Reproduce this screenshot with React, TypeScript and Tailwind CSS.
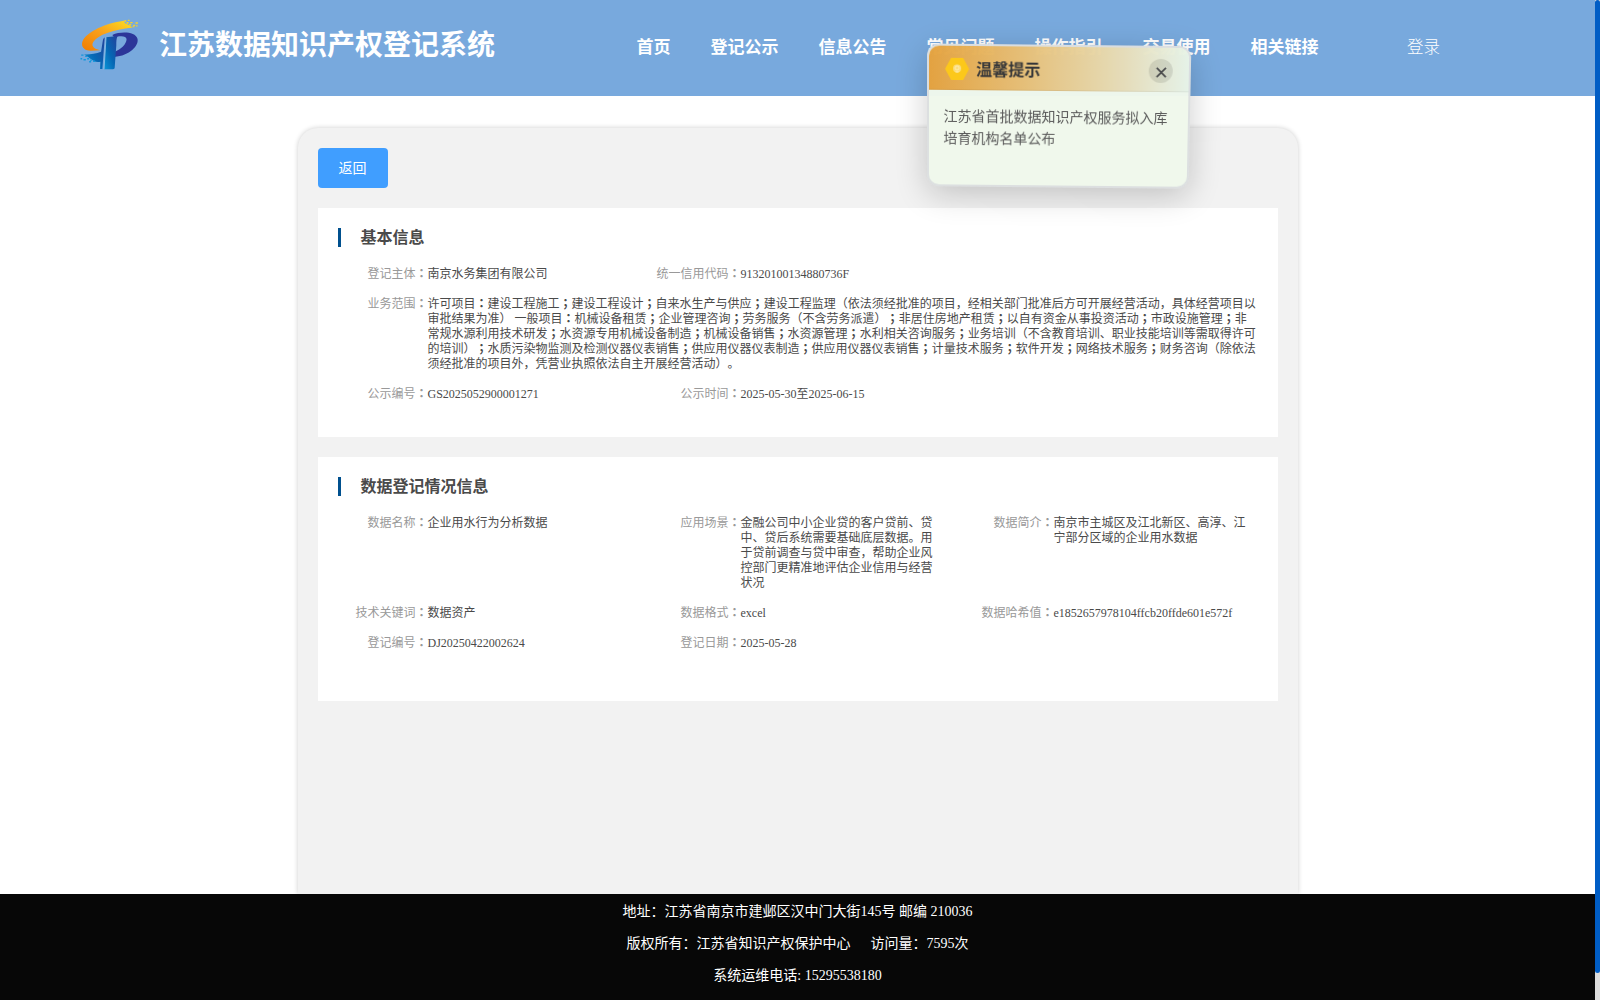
import { Fragment } from "react";

type Field = {
  label: string;
  value: string;
  wide?: boolean;
  half?: boolean;
};

const navItems = ["首页", "登记公示", "信息公告", "常见问题", "操作指引", "交易使用", "相关链接"];

const basicFields: Field[] = [
  { label: "登记主体", value: "南京水务集团有限公司" },
  { label: "统一信用代码", value: "91320100134880736F", half: true },
  {
    label: "业务范围",
    value:
      "许可项目：建设工程施工；建设工程设计；自来水生产与供应；建设工程监理（依法须经批准的项目，经相关部门批准后方可开展经营活动，具体经营项目以\n" +
      "审批结果为准） 一般项目：机械设备租赁；企业管理咨询；劳务服务（不含劳务派遣）；非居住房地产租赁；以自有资金从事投资活动；市政设施管理；非\n" +
      "常规水源利用技术研发；水资源专用机械设备制造；机械设备销售；水资源管理；水利相关咨询服务；业务培训（不含教育培训、职业技能培训等需取得许可\n" +
      "的培训）；水质污染物监测及检测仪器仪表销售；供应用仪器仪表制造；供应用仪器仪表销售；计量技术服务；软件开发；网络技术服务；财务咨询（除依法\n" +
      "须经批准的项目外，凭营业执照依法自主开展经营活动）。",
    wide: true,
  },
  { label: "公示编号", value: "GS2025052900001271" },
  { label: "公示时间", value: "2025-05-30至2025-06-15", half: true },
];

const dataFields: Field[] = [
  { label: "数据名称", value: "企业用水行为分析数据" },
  {
    label: "应用场景",
    value:
      "金融公司中小企业贷的客户贷前、贷\n中、贷后系统需要基础底层数据。用\n于贷前调查与贷中审查，帮助企业风\n控部门更精准地评估企业信用与经营\n状况",
  },
  { label: "数据简介", value: "南京市主城区及江北新区、高淳、江\n宁部分区域的企业用水数据" },
  { label: "技术关键词", value: "数据资产" },
  { label: "数据格式", value: "excel" },
  { label: "数据哈希值", value: "e1852657978104ffcb20ffde601e572f" },
  { label: "登记编号", value: "DJ20250422002624" },
  { label: "登记日期", value: "2025-05-28" },
];

function Logo() {
  return (
    <svg viewBox="30 25 180 160" className="h-[53px] w-[60px]" aria-hidden>
      <defs>
        <linearGradient id="swoosh" x1="0" y1="1" x2="1" y2="0">
          <stop offset="0" stopColor="#f07c00" />
          <stop offset="0.5" stopColor="#f9a01b" />
          <stop offset="1" stopColor="#fde021" />
        </linearGradient>
        <linearGradient id="stem" x1="0" y1="1" x2="1" y2="0">
          <stop offset="0" stopColor="#0a94d6" />
          <stop offset="0.45" stopColor="#0567b4" />
          <stop offset="1" stopColor="#24409a" />
        </linearGradient>
      </defs>
      <path
        d="M162 33 C118 38 62 60 42 86 C28 106 38 124 62 124 L91 122 C70 119 62 108 70 97 C84 76 128 61 188 54 L179 48 L172 44 L165 41 Z"
        fill="url(#swoosh)"
      />
      <path
        d="M163 32h6v4h-6z M174 30h5v4h-5z M170 37h6v5h-6z M181 37h7v4h-7z M178 43h6v5h-6z M190 45h6v4h-6z M197 38h7v4h-7z M188 50h6v3h-6z M199 47h4v4h-4z"
        fill="#fbd324"
      />
      <path
        d="M104 84 C102 84 99 88 98 95 L93 127 C76 133 58 136 42 135 L54 143 L62 149 L70 154 C77 158 84 159 91 157 L90 179 L97 179 Z"
        fill="url(#stem)"
      />
      <path
        d="M33 135h7v4h-7z M45 139h7v4h-7z M31 146h5v4h-5z M40 149h7v4h-7z M51 146h6v4h-6z M60 150h6v4h-6z M57 155h6v4h-6z M69 153h6v5h-6z"
        fill="#1298dc"
      />
      <path
        d="M133 143 C179 139 208 109 203 88 C197 66 153 65 127 76 L133 84 C151 77 170 79 170 89 C170 103 153 120 134 127 Z"
        fill="#2c3699"
      />
      <path d="M108 83 L143 79 C139 86 139 96 139 108 L134 176 C133 179 130 180 127 180 L102 180 Z" fill="url(#stem)" />
      <path d="M108 83 L102 180" stroke="#8fc4eb" strokeWidth="2.5" />
    </svg>
  );
}

// Colons and semicolons sit in the middle of their cell, unlike the other marks.
function Prose({ text }: { text: string }) {
  return (
    <>
      {text.split(/([：；])/).map((part, index) =>
        part === "：" || part === "；" ? (
          <span key={index} className="font-['Liberation_Serif','Noto_Sans_CJK_JP',sans-serif] font-bold" lang="ja">
            {part}
          </span>
        ) : (
          <Fragment key={index}>{part}</Fragment>
        ),
      )}
    </>
  );
}

function InfoField({ label, value, wide, half }: Field) {
  return (
    <div className={wide ? "col-span-3 flex" : half ? "col-span-2 flex" : "flex"}>
      <span className="w-[90px] shrink-0 text-right text-[#999]">
        <Prose text={`${label}：`} />
      </span>
      <span className="whitespace-pre text-[#4a4a4a]">
        <Prose text={value} />
      </span>
    </div>
  );
}

function InfoCard({ title, fields, className }: { title: string; fields: Field[]; className: string }) {
  return (
    <section className={`bg-white p-5 ${className}`}>
      <h2 className="flex h-[19px] items-center border-l-[3px] border-[#00508e] pl-5 text-base font-bold text-[#4a4a4a]">
        {title}
      </h2>
      <div className="mt-5 grid grid-cols-[313px_313px_313px] gap-y-[15px] text-xs leading-[15px]">
        {fields.map((field) => (
          <InfoField key={field.label} {...field} />
        ))}
      </div>
    </section>
  );
}

function NoticePopup() {
  return (
    <div className="absolute left-[927px] top-[45px] h-[143px] w-[263px] overflow-hidden rounded-xl border-2 border-[#dcdfe0] bg-[#f0f8ec] opacity-[0.98] shadow-[0_8px_32px_rgba(0,0,0,0.2)] [transform:perspective(1000px)_rotateX(-4deg)_rotate(0.57deg)]">
      <div className="flex h-11 items-center border-b border-black/5 bg-[linear-gradient(90deg,#e6a23c_0%,#e8c178_38%,#e8d8ab_68%,#e8f4e8_100%)] pl-4 pr-4">
        <svg viewBox="0 0 24 22" className="mt-0.5 h-[22px] w-6" aria-hidden>
          <path d="M6 0h12l6 11-6 11H6L0 11z" fill="#ffc914" />
          <circle cx="12" cy="10.5" r="4" fill="#ffdf7a" />
          <circle cx="12" cy="10" r="2" fill="none" stroke="#fff0b5" strokeWidth="0.8" />
          <path d="M10.5 14h3" stroke="#fff0b5" />
        </svg>
        <h3 className="ml-[7px] mt-1 text-base font-bold text-[#333]">温馨提示</h3>
        <button className="ml-auto mt-[3px] flex h-6 w-6 items-center justify-center rounded-full bg-black/10" aria-label="关闭">
          <svg viewBox="0 0 12 12" className="mt-[3px] h-[11px] w-[11px]" stroke="#444" strokeWidth="1.8" aria-hidden>
            <path d="M1 1l10 10M11 1L1 11" />
          </svg>
        </button>
      </div>
      <p className="whitespace-nowrap px-[14.5px] pt-4 text-sm leading-[22px] text-[#555]">
        江苏省首批数据知识产权服务拟入库
        <br />
        培育机构名单公布
      </p>
    </div>
  );
}

export default function App() {
  return (
    <div
      lang="zh-CN"
      className="relative flex h-[1000px] w-[1600px] overflow-hidden bg-white font-['Liberation_Serif','Noto_Sans_CJK_SC',serif] [text-spacing-trim:space-all]"
    >
      <div className="flex w-[1595px] flex-col">
        <header className="flex h-24 shrink-0 bg-[#78a9dd] pl-20 text-white">
          <div className="pt-[18px]">
            <Logo />
          </div>
          <h1 className="ml-[19px] w-[477.5px] text-[28px] font-bold leading-[92px]">江苏数据知识产权登记系统</h1>
          <nav className="flex gap-10 text-[17px] font-bold leading-[95px]">
            {navItems.map((item) => (
              <a key={item}>{item}</a>
            ))}
          </nav>
          <a className="ml-[88.5px] text-[16.5px] font-light leading-[95px]">登录</a>
        </header>

        <main className="mx-auto mt-8 w-[1000px] flex-1 rounded-t-[20px] bg-[#f2f2f2] p-5 shadow-[0_0_5px_rgba(0,0,0,0.2)]">
          <button className="block h-10 w-[70px] rounded bg-[#409eff] pt-px text-sm text-white">返回</button>
          <InfoCard title="基本信息" fields={basicFields} className="mt-5 h-[229px]" />
          <InfoCard title="数据登记情况信息" fields={dataFields} className="mt-5 h-[244px]" />
        </main>

        <footer className="h-[106px] shrink-0 bg-[#070707] pt-0.5 text-center text-sm leading-8 text-white">
          <p>地址：江苏省南京市建邺区汉中门大街145号 邮编 210036</p>
          <p>
            版权所有：江苏省知识产权保护中心<span className="ml-5">访问量：7595次</span>
          </p>
          <p>系统运维电话: 15295538180</p>
        </footer>
      </div>

      <div className="w-[5px] bg-[#dcdcdc]">
        <div className="h-[973px] rounded-[3px] bg-[#005dc5]" />
      </div>

      <NoticePopup />
    </div>
  );
}
